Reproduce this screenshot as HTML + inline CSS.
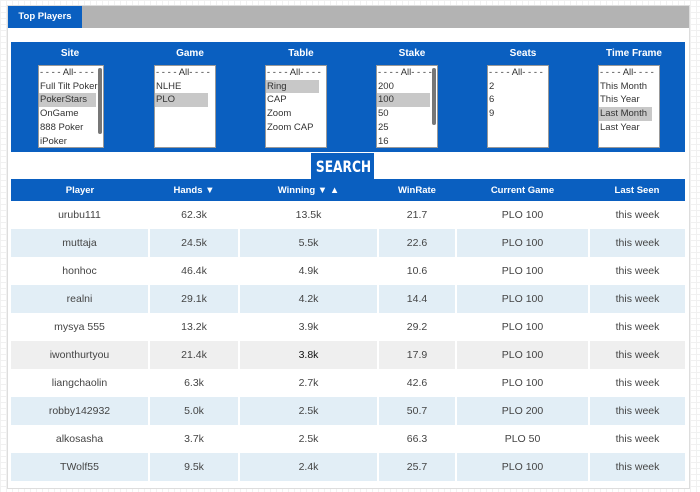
<!DOCTYPE html>
<html><head><style>
*{margin:0;padding:0;box-sizing:border-box}
body{width:700px;height:492px;background:#fff;font-family:"Liberation Sans",sans-serif;font-size:10px;color:#444;position:relative;overflow:hidden;
background-image:linear-gradient(#f1f1f1 1px,transparent 1px),linear-gradient(90deg,#f1f1f1 1px,transparent 1px);background-size:6px 6px}
.panel{position:absolute;left:7px;top:5px;width:683px;height:484px;background:#fff;border:1px solid #ddd}
.tabbar{position:absolute;left:8px;top:6px;width:681px;height:22px;background:#b3b3b3}
.tab{position:absolute;left:8px;top:6px;width:74px;height:22px;background:#0a5fc0;color:#fff;font-weight:bold;font-size:9.5px;line-height:22px;text-align:center}
.filters{position:absolute;left:11px;top:42px;width:674px;height:110px;background:#0a5fc0}
.f{position:absolute;top:0;width:110px}
.f h4{color:#fff;font-size:10px;text-align:center;margin-top:6px;height:17px}
.sel{position:absolute;top:23px;background:#fff;border:1px solid #999;height:83px;font-size:9.5px;line-height:13.7px;color:#333;overflow:hidden}
.sel div{padding-left:1px;white-space:nowrap}
.sel .s{background:#c8c8c8}
.sb{position:absolute;right:1px;top:2px;width:4px;height:66px;background:#777;border-radius:2px}
.search{position:absolute;left:311px;top:153px;width:63px;height:26px;background:#0a5fc0;color:#fff;font-weight:bold;font-size:16px;text-align:center;line-height:27px;font-family:"DejaVu Sans Condensed","Liberation Sans Narrow",sans-serif;transform-origin:center;}
.search span{display:inline-block;transform:scaleX(0.85)}
table{position:absolute;left:11px;top:179px;width:674px;border-collapse:collapse;font-size:10.5px}
th{background:#0a5fc0;color:#fff;height:22px;font-weight:bold;font-size:9.5px}
td{height:28px;text-align:center;border-left:2px solid #fff;color:#444}
td:first-child{border-left:none}
tr.b td{background:#e2eef6}
tr.g td{background:#efefef}
</style></head><body>
<div class="panel"></div>
<div class="tabbar"></div>
<div class="tab">Top Players</div>
<div class="filters">
 <div class="f" style="left:4px"><h4>Site</h4><div class="sel" style="left:23px;width:66px"><div>- - - - All- - - -</div><div>Full Tilt Poker</div><div class="s" style="width:57px">PokerStars</div><div>OnGame</div><div>888 Poker</div><div>iPoker</div><span class="sb"></span></div></div>
 <div class="f" style="left:124px"><h4>Game</h4><div class="sel" style="left:19px;width:62px"><div>- - - - All- - - -</div><div>NLHE</div><div class="s" style="width:53px">PLO</div></div></div>
 <div class="f" style="left:235px"><h4>Table</h4><div class="sel" style="left:19px;width:62px"><div>- - - - All- - - -</div><div class="s" style="width:53px">Ring</div><div>CAP</div><div>Zoom</div><div>Zoom CAP</div></div></div>
 <div class="f" style="left:346px"><h4>Stake</h4><div class="sel" style="left:19px;width:62px"><div>- - - - All- - - -</div><div>200</div><div class="s" style="width:53px">100</div><div>50</div><div>25</div><div>16</div><span class="sb" style="height:57px"></span></div></div>
 <div class="f" style="left:457px"><h4>Seats</h4><div class="sel" style="left:19px;width:62px"><div>- - - - All- - - -</div><div>2</div><div>6</div><div>9</div></div></div>
 <div class="f" style="left:568px"><h4>Time Frame</h4><div class="sel" style="left:19px;width:62px"><div>- - - - All- - - -</div><div>This Month</div><div>This Year</div><div class="s" style="width:53px">Last Month</div><div>Last Year</div></div></div>
</div>
<div class="search"><span>SEARCH</span></div>
<table>
<tr><th style="width:138px">Player</th><th style="width:90px">Hands ▼</th><th style="width:139px">Winning ▼ ▲</th><th style="width:78px">WinRate</th><th style="width:133px">Current Game</th><th>Last Seen</th></tr>
<tr><td>urubu111</td><td>62.3k</td><td>13.5k</td><td>21.7</td><td>PLO 100</td><td>this week</td></tr>
<tr class="b"><td>muttaja</td><td>24.5k</td><td>5.5k</td><td>22.6</td><td>PLO 100</td><td>this week</td></tr>
<tr><td>honhoc</td><td>46.4k</td><td>4.9k</td><td>10.6</td><td>PLO 100</td><td>this week</td></tr>
<tr class="b"><td>realni</td><td>29.1k</td><td>4.2k</td><td>14.4</td><td>PLO 100</td><td>this week</td></tr>
<tr><td>mysya 555</td><td>13.2k</td><td>3.9k</td><td>29.2</td><td>PLO 100</td><td>this week</td></tr>
<tr class="g"><td>iwonthurtyou</td><td>21.4k</td><td style="color:#111">3.8k</td><td>17.9</td><td>PLO 100</td><td>this week</td></tr>
<tr><td>liangchaolin</td><td>6.3k</td><td>2.7k</td><td>42.6</td><td>PLO 100</td><td>this week</td></tr>
<tr class="b"><td>robby142932</td><td>5.0k</td><td>2.5k</td><td>50.7</td><td>PLO 200</td><td>this week</td></tr>
<tr><td>alkosasha</td><td>3.7k</td><td>2.5k</td><td>66.3</td><td>PLO 50</td><td>this week</td></tr>
<tr class="b"><td>TWolf55</td><td>9.5k</td><td>2.4k</td><td>25.7</td><td>PLO 100</td><td>this week</td></tr>
</table>
</body></html>
